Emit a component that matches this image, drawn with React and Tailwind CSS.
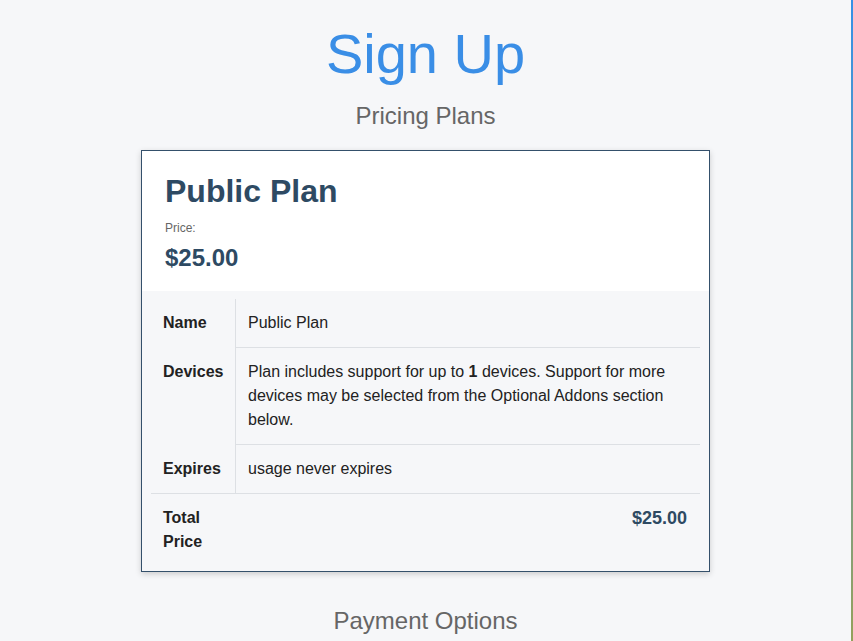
import React from "react";

const rows = [
  { label: "Name", value: <>Public Plan</> },
  {
    label: "Devices",
    value: (
      <>
        Plan includes support for up to <b>1</b> devices. Support for more devices may be
        selected from the Optional Addons section below.
      </>
    ),
  },
  { label: "Expires", value: <>usage never expires</> },
];

const App = () => {
  return (
    <div className="flex min-h-[641px] bg-[#f6f7f9] font-['Liberation_Sans',Arial,sans-serif]">
      <div className="flex-1 flex flex-col items-center pt-[22px]">
        <h1 className="text-[56px] leading-[64px] text-[#3a8ee6]">Sign Up</h1>
        <h2 className="mt-[14px] text-[24px] leading-[32px] text-[#666]">Pricing Plans</h2>

        {/* plan card */}
        <div className="mt-[18px] w-[569px] border border-[#34506b] bg-[#f6f7f9] shadow-[0_2px_6px_rgba(0,0,0,0.18)]">
          <div className="bg-white px-[23px] pt-[20px] pb-[17px]">
            <div className="text-[32px] leading-[40px] font-bold text-[#2e4a63]">Public Plan</div>
            <div className="mt-[9px] text-[12px] leading-[16px] text-[#666]">Price:</div>
            <div className="mt-[6px] text-[24px] leading-[32px] font-bold text-[#2e4a63]">$25.00</div>
          </div>

          <div className="px-[9px] pt-[8px] pb-[5px]">
            <div className="grid grid-cols-[85px_1fr] text-[16px] leading-[24px] text-[#222]">
              {rows.map((r, i) => {
                const last = i === rows.length - 1;
                return (
                  <React.Fragment key={r.label}>
                    <div
                      className={
                        "px-[12px] py-[12px] font-bold border-r border-[#dde0e4]" +
                        (last ? " border-b" : "")
                      }
                    >
                      {r.label}
                    </div>
                    <div className="px-[12px] py-[12px] border-b border-[#dde0e4]">{r.value}</div>
                  </React.Fragment>
                );
              })}
              <div className="px-[12px] py-[12px] font-bold">Total Price</div>
              <div className="pl-[12px] pr-[13px] py-[12px] text-right text-[18px] font-bold text-[#2e4a63]">
                $25.00
              </div>
            </div>
          </div>
        </div>

        <h2 className="mt-[33px] text-[24px] leading-[32px] text-[#666]">Payment Options</h2>
      </div>
      <div className="w-[2px] bg-gradient-to-b from-[#3590e6] to-[#94a05a]" />
    </div>
  );
};

export default App;
